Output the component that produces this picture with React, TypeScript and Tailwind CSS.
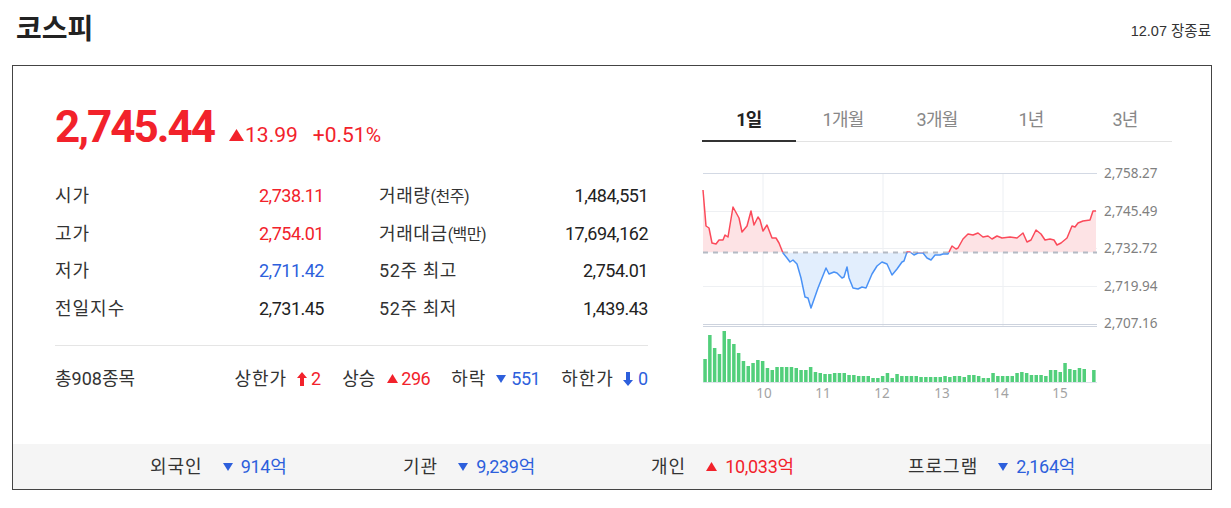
import React from 'react';

// 1일 chart polyline, page coordinates
const LINE: [number, number][] = [
  [703, 189], [706, 225], [709, 227], [712, 242], [716, 243], [719, 239], [723, 239], [725, 234],
  [728, 236], [733, 206], [739, 217], [742, 231], [747, 225], [751, 210], [754, 224], [758, 216],
  [760, 219], [763, 230], [767, 224], [772, 237], [776, 237], [779, 242], [783, 252], [787, 257],
  [790, 261], [793, 259], [797, 263], [801, 277], [805, 296], [808, 297], [811, 307], [818, 287],
  [822, 277], [826, 267], [829, 273], [834, 271], [837, 272], [842, 277], [844, 276], [847, 266],
  [849, 277], [853, 287], [858, 288], [862, 286], [866, 287], [872, 273], [877, 265], [882, 261],
  [887, 263], [892, 274], [897, 268], [902, 261], [904, 260], [907, 251], [910, 251], [914, 254],
  [918, 252], [923, 252], [927, 257], [931, 259], [935, 254], [940, 254], [943, 253], [948, 253],
  [952, 245], [956, 248], [958, 247], [963, 238], [968, 233], [973, 234], [978, 232], [983, 236],
  [988, 235], [992, 238], [997, 235], [1002, 237], [1010, 236], [1017, 237], [1023, 232], [1027, 241],
  [1031, 239], [1036, 229], [1041, 233], [1045, 239], [1050, 238], [1054, 239], [1057, 244], [1061, 242],
  [1067, 237], [1072, 225], [1075, 226], [1078, 222], [1083, 220], [1090, 219], [1093, 210], [1096, 210],
];

const VOL = [
  23, 47, 34, 28, 51, 43, 38, 29, 21, 16, 19, 22, 21, 14, 12, 15, 15, 15, 15, 14, 12, 12, 15, 10, 9, 8,
  8, 9, 9, 9, 7, 7, 6, 6, 6, 4, 4, 6, 9, 4, 8, 6, 6, 6, 6, 5, 5, 5, 5, 5, 6, 5, 6, 6, 5, 7, 7, 6, 4, 4,
  9, 6, 6, 6, 6, 9, 10, 9, 7, 7, 7, 6, 12, 12, 10, 19, 13, 12, 14, 13, 0, 12,
];

const RED = 'text-[#f2222b]';
const BLUE = 'text-[#2d5fdc]';

const UpTri = ({ className = '' }: { className?: string }) => (
  <svg viewBox="0 0 10 8" className={className}>
    <path d="M5 0 L10 8 L0 8 Z" fill="currentColor" />
  </svg>
);

const DownTri = ({ className = '' }: { className?: string }) => (
  <svg viewBox="0 0 10 8" className={className}>
    <path d="M0 0 L10 0 L5 8 Z" fill="currentColor" />
  </svg>
);

const UpArrow = ({ className = '' }: { className?: string }) => (
  <svg viewBox="0 0 10 14" className={className}>
    <path d="M5 0 L10 6 L7 6 L7 14 L3 14 L3 6 L0 6 Z" fill="currentColor" />
  </svg>
);

const DownArrow = ({ className = '' }: { className?: string }) => (
  <svg viewBox="0 0 10 14" className={className}>
    <path d="M3 0 L7 0 L7 8 L10 8 L5 14 L0 8 L3 8 Z" fill="currentColor" />
  </svg>
);

const leftStats = [
  { label: '시가', value: '2,738.11', color: RED },
  { label: '고가', value: '2,754.01', color: RED },
  { label: '저가', value: '2,711.42', color: BLUE },
  { label: '전일지수', value: '2,731.45', color: 'text-[#222]' },
];

const rightStats = [
  { label: '거래량', sub: '(천주)', value: '1,484,551' },
  { label: '거래대금', sub: '(백만)', value: '17,694,162' },
  { label: '52주 최고', sub: '', value: '2,754.01' },
  { label: '52주 최저', sub: '', value: '1,439.43' },
];

const tabs = ['1일', '1개월', '3개월', '1년', '3년'];

const investors = [
  { label: '외국인', value: '914억', up: false, w: 'w-[253px]' },
  { label: '기관', value: '9,239억', up: false, w: 'w-[248px]' },
  { label: '개인', value: '10,033억', up: true, w: 'w-[257px]' },
  { label: '프로그램', value: '2,164억', up: false, w: 'w-auto' },
];

function Chart() {
  const ox = 702;
  const oy = 160;
  const base = 91.5;
  const pts = LINE.map(([x, y]) => [x - ox, y - oy]);
  const d = pts.map((p, i) => `${i ? 'L' : 'M'}${p[0]},${p[1]}`).join(' ');
  const last = pts[pts.length - 1];
  const area = `${d} L${last[0]},${base} L${pts[0][0]},${base} Z`;
  const yLabels = [
    ['2,758.27', 13],
    ['2,745.49', 51],
    ['2,732.72', 88],
    ['2,719.94', 126],
    ['2,707.16', 163],
  ] as const;
  const xLabels = [
    ['10', 62],
    ['11', 121],
    ['12', 180],
    ['13', 240],
    ['14', 299],
    ['15', 358],
  ] as const;

  return (
    <svg width="470" height="245" viewBox="0 0 470 245" className="block mt-[19px]">
      <defs>
        <clipPath id="upClip">
          <rect x="0" y="0" width="470" height={base} />
        </clipPath>
        <clipPath id="dnClip">
          <rect x="0" y={base} width="470" height={245 - base} />
        </clipPath>
      </defs>

      {/* grid */}
      {[61, 181, 301].map((x) => (
        <line key={x} x1={x} x2={x} y1={12} y2={166} stroke="#eceff3" strokeWidth="1" />
      ))}
      <line x1="1" x2="395" y1="12.5" y2="12.5" stroke="#d3d9e4" />
      <line x1="1" x2="395" y1="50.5" y2="50.5" stroke="#eef0f3" />
      <line x1="1" x2="395" y1="87.5" y2="87.5" stroke="#eef0f3" />
      <line x1="1" x2="395" y1="125.5" y2="125.5" stroke="#eef0f3" />
      <line x1="1" x2="395" y1="163.5" y2="163.5" stroke="#cdd3de" />
      <line x1="1" x2="395" y1="165.5" y2="165.5" stroke="#cdd3de" />

      {/* area + line */}
      <path d={area} fill="#fde3e5" clipPath="url(#upClip)" />
      <path d={area} fill="#e2eefd" clipPath="url(#dnClip)" />
      <line x1="1" x2="395" y1={base} y2={base} stroke="#b4bac4" strokeWidth="2" strokeDasharray="5 5" />
      <path d={d} fill="none" stroke="#fb4a5a" strokeWidth="1.5" strokeLinejoin="round" clipPath="url(#upClip)" />
      <path d={d} fill="none" stroke="#4a92f6" strokeWidth="1.5" strokeLinejoin="round" clipPath="url(#dnClip)" />

      {/* volume */}
      <line x1="1" x2="395" y1="221.5" y2="221.5" stroke="#dde2ea" />
      {VOL.map((h, i) =>
        h > 0 ? <rect key={i} x={1.3 + i * 4.8} y={221 - h} width="3.5" height={h} fill="#52cf7b" /> : null
      )}

      {yLabels.map(([t, y]) => (
        <text key={t} x="402" y={y} dominantBaseline="middle" fontFamily="Noto Sans, sans-serif" fontSize="13.5" fill="#808080">
          {t}
        </text>
      ))}
      {xLabels.map(([t, x]) => (
        <text key={t} x={x} y="233" textAnchor="middle" dominantBaseline="middle" fontFamily="Noto Sans, sans-serif" fontSize="13.5" fill="#a3a3a3">
          {t}
        </text>
      ))}
    </svg>
  );
}

export default function App() {
  return (
    <div className="w-[1231px] h-[508px] bg-white text-[#222] font-['Roboto','Noto_Sans_CJK_KR',sans-serif]">
      {/* title */}
      <div className="h-[65px] pl-[16px] pr-[20px] flex items-start justify-between">
        <h1 className="mt-[8px] text-[28px] leading-[38px] font-bold text-[#222] font-['Noto_Sans_CJK_KR',sans-serif]">
          코스피
        </h1>
        <span className="mt-[22px] text-[14.5px] leading-[18px] text-[#333] font-['Liberation_Sans','Noto_Sans_CJK_KR',sans-serif]">
          12.07 장종료
        </span>
      </div>

      <div className="ml-[12px] w-[1200px] border border-[#444]">
        <div className="h-[378px] flex pl-[42px] pr-[39px] gap-[54px]">
          {/* left */}
          <div className="w-[593px] flex flex-col">
            <div className="mt-[31px] h-[60px] flex items-baseline">
              <span className={`text-[44px] font-bold tracking-[-2px] leading-[60px] ${RED}`}>2,745.44</span>
              <span className={`ml-[15px] flex items-baseline text-[21px] ${RED}`}>
                <UpTri className="w-[15px] h-[12px] mr-[1px] self-center -mt-[2px]" />
                13.99
              </span>
              <span className={`ml-[15px] text-[21px] ${RED}`}>+0.51%</span>
            </div>

            <div className="mt-[20px] grid grid-cols-2 gap-x-[55px] text-[18px]">
              <div className="flex flex-col">
                {leftStats.map((s) => (
                  <div key={s.label} className="h-[37.5px] flex items-center justify-between">
                    <span className="text-[#333] tracking-[1px]">{s.label}</span>
                    <span className={`tracking-[-0.5px] ${s.color}`}>{s.value}</span>
                  </div>
                ))}
              </div>
              <div className="flex flex-col">
                {rightStats.map((s) => (
                  <div key={s.label} className="h-[37.5px] flex items-center justify-between">
                    <span className="text-[#333] tracking-[0.6px]">
                      {s.label}
                      {s.sub && <span className="text-[16px] tracking-[-0.5px]">{s.sub}</span>}
                    </span>
                    <span className="text-[#222] tracking-[-0.5px]">{s.value}</span>
                  </div>
                ))}
              </div>
            </div>

            <div className="mt-[18px] border-t border-[#e5e5e5] h-[66px] flex items-center justify-between text-[18px]">
              <span className="text-[#333]">총908종목</span>
              <div className="flex items-center gap-[21px]">
                <span className="flex items-center">
                  <span className="text-[#333] tracking-[1px]">상한가</span>
                  <UpArrow className={`ml-[10px] mr-[4px] w-[10px] h-[14px] ${RED}`} />
                  <span className={RED}>2</span>
                </span>
                <span className="flex items-center">
                  <span className="text-[#333]">상승</span>
                  <UpTri className={`ml-[12px] mr-[3px] w-[11px] h-[9px] ${RED}`} />
                  <span className={`tracking-[-0.5px] ${RED}`}>296</span>
                </span>
                <span className="flex items-center">
                  <span className="text-[#333] tracking-[1px]">하락</span>
                  <DownTri className={`ml-[10px] mr-[5px] w-[10px] h-[8px] ${BLUE}`} />
                  <span className={`tracking-[-0.5px] ${BLUE}`}>551</span>
                </span>
                <span className="flex items-center">
                  <span className="text-[#333] tracking-[1px]">하한가</span>
                  <DownArrow className={`ml-[9px] mr-[5px] w-[10px] h-[14px] ${BLUE}`} />
                  <span className={BLUE}>0</span>
                </span>
              </div>
            </div>
          </div>

          {/* right */}
          <div className="w-[470px] flex flex-col">
            <div className="mt-[33px] flex">
              {tabs.map((t, i) => (
                <div
                  key={t}
                  className={`w-[94px] h-[43px] flex items-center justify-center text-[18px] tracking-[-0.8px] ${
                    i === 0
                      ? 'font-bold text-[#222] border-b-2 border-[#333]'
                      : 'text-[#888] border-b border-[#e3e3e3] pb-px'
                  }`}
                >
                  {t}
                </div>
              ))}
            </div>
            <Chart />
          </div>
        </div>

        {/* investors */}
        <div className="h-[45px] bg-[#f5f5f5] flex items-center pl-[137px] text-[18px]">
          {investors.map((v) => (
            <div key={v.label} className={`${v.w} flex items-center`}>
              <span className="text-[#333] tracking-[1px]">{v.label}</span>
              {v.up ? (
                <UpTri className={`ml-[20px] mr-[8px] w-[11px] h-[9px] ${RED}`} />
              ) : (
                <DownTri className={`ml-[20px] mr-[8px] w-[10px] h-[8px] ${BLUE}`} />
              )}
              <span className={`tracking-[-0.3px] ${v.up ? RED : BLUE}`}>{v.value}</span>
            </div>
          ))}
        </div>
      </div>
    </div>
  );
}
